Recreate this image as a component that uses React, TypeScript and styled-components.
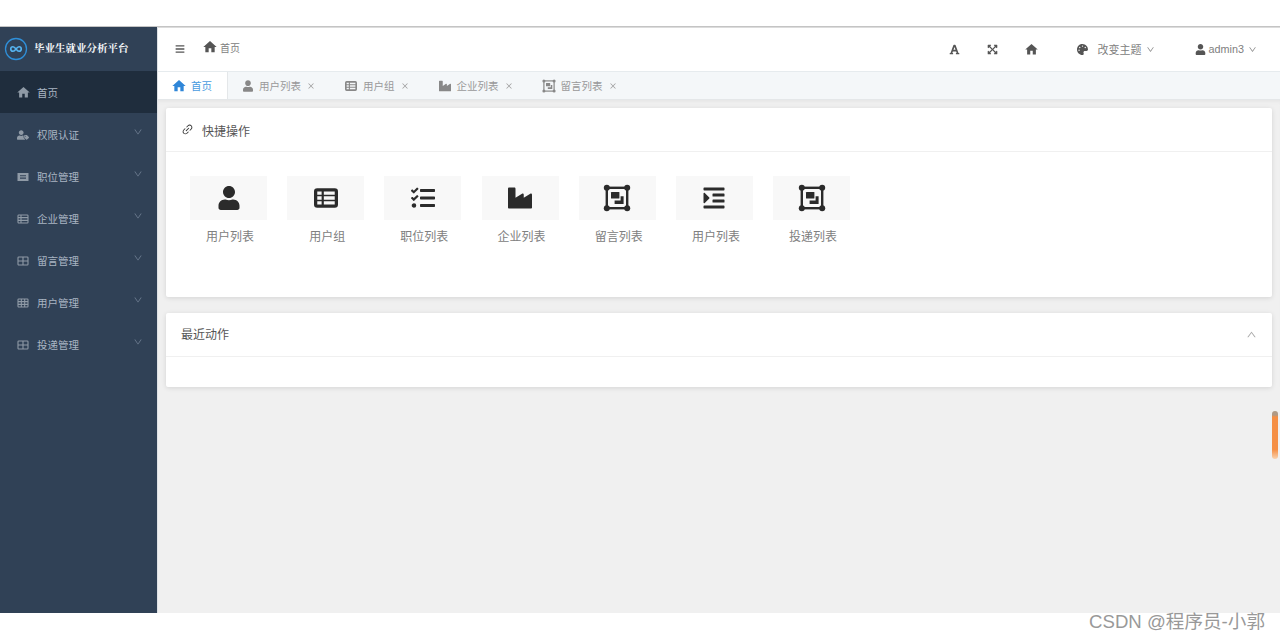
import React from "react";
import styled, { createGlobalStyle } from "styled-components";
import {
  FaBars,
  FaFont,
  FaExpandArrowsAlt,
  FaIndent,
  FaIndustry,
  FaPalette,
  FaTasks,
  FaUser,
  FaUserTag,
} from "react-icons/fa";
import { MdHome } from "react-icons/md";
import { AiOutlineClose, AiOutlineDown, AiOutlineLink, AiOutlineUp } from "react-icons/ai";

const GlobalStyle = createGlobalStyle`
  html, body {
    margin: 0;
    padding: 0;
    background: #fff;
  }
  body {
    font-family: "Noto Sans CJK SC", "Liberation Sans", sans-serif;
  }
`;

const Page = styled.div`
  position: relative;
  width: 1280px;
  height: 640px;
  overflow: hidden;
  padding-top: 26px;
  box-sizing: border-box;
`;

const Frame = styled.div`
  display: flex;
  height: 587px;
  box-sizing: border-box;
  border-top: 1px solid #c4c4c4;
`;

const Sidebar = styled.aside`
  width: 158px;
  flex-shrink: 0;
  background: #304156;
  border-right: 1px solid #dde1e5;
  box-sizing: border-box;
`;

const Logo = styled.div`
  display: flex;
  align-items: center;
  height: 44px;
  padding-left: 4px;
  gap: 6px;
  color: #f2f5f8;
  font-family: "Noto Serif CJK SC", "Noto Sans CJK SC", sans-serif;
  font-size: 10.5px;
  font-weight: 700;
`;

const LogoText = styled.span`
  margin-top: -3px;
`;

const MenuItem = styled.div<{ $active?: boolean }>`
  display: flex;
  align-items: center;
  height: 42px;
  padding: 1px 14px 0 17px;
  box-sizing: border-box;
  background: ${(p) => (p.$active ? "#1f2d3d" : "transparent")};
  color: #a9b5c3;
  font-size: 10.5px;

  svg.lead {
    width: 12px;
    height: 12px;
    margin-right: 8px;
    color: #8f9aa6;
  }
  svg.home {
    width: 15px;
    height: 15px;
    margin: 0 6px 0 -1px;
  }
`;

const MenuLabel = styled.span`
  flex: 1;
`;

const MenuArrow = styled(AiOutlineDown)`
  width: 10px;
  height: 10px;
  margin-top: -5px;
  color: #6f7f92;
`;

const Main = styled.main`
  flex: 1;
  display: flex;
  flex-direction: column;
  background: #f0f0f0;
  min-width: 0;
`;

const Header = styled.header`
  display: flex;
  align-items: center;
  height: 44px;
  background: #fff;
  box-shadow: inset 0 1px 0 #dcdcdc;
  color: #555;
  font-size: 11px;
  box-sizing: border-box;
`;

const Burger = styled(FaBars)`
  width: 10px;
  height: 10px;
  margin-left: 17px;
  margin-right: 17px;
  color: #555;
`;

const Crumb = styled.div`
  display: flex;
  align-items: center;
  gap: 2px;
  flex: 1;
  margin-top: -4px;
  font-size: 10px;
  color: #808080;

  svg {
    width: 16px;
    height: 16px;
    color: #555;
  }
`;

const ToolIcon = styled.span<{ $right: number; $size?: number }>`
  display: flex;
  margin-right: ${(p) => p.$right}px;
  color: #555;

  svg {
    width: ${(p) => p.$size ?? 11}px;
    height: ${(p) => p.$size ?? 11}px;
  }
`;

const HeadMenu = styled.div<{ $right: number }>`
  display: flex;
  align-items: center;
  margin-right: ${(p) => p.$right}px;
  color: #808080;
  font-size: 11px;
  line-height: 16px;

  svg.lead {
    width: 11px;
    height: 11px;
    color: #555;
  }
  svg.caret {
    width: 9px;
    height: 9px;
    color: #888;
    margin-left: 4px;
  }
`;

const ThemeLabel = styled.span`
  margin-left: 10px;
  margin-top: -1px;
`;

const UserLabel = styled.span`
  margin-left: 3px;
  font-family: "Liberation Sans", sans-serif;
  font-size: 10.8px;
`;

const TabBar = styled.nav`
  display: flex;
  height: 29px;
  background: #f4f7f9;
  border-top: 1px solid #e6ebee;
  border-bottom: 1px solid #e4e7e9;
  box-sizing: border-box;
`;

const Tab = styled.div<{ $active?: boolean }>`
  display: flex;
  align-items: center;
  padding: 0 15px;
  background: ${(p) => (p.$active ? "#fff" : "transparent")};
  border-right: ${(p) => (p.$active ? "1px solid #e4e7e9" : "none")};
  color: ${(p) => (p.$active ? "#4a9be0" : "#999")};
  font-size: 10.5px;

  svg.lead {
    width: 12px;
    height: 12px;
    margin-right: 6px;
    color: ${(p) => (p.$active ? "#2f86d8" : "#888")};
  }
  svg.narrow {
    width: 10px;
  }
  svg.home {
    width: 16px;
    height: 16px;
    margin: 0 4px 0 -2px;
  }
  svg.close {
    width: 8px;
    height: 8px;
    margin-left: 6px;
    color: #999;
  }
`;

const Content = styled.section`
  display: flex;
  flex-direction: column;
  gap: 16px;
  padding: 8px 8px 0 8px;
  box-shadow: inset 0 4px 4px -3px #e2e2e2;
`;

const Card = styled.div<{ $height: number }>`
  height: ${(p) => p.$height}px;
  background: #fff;
  border-radius: 2px;
  box-shadow: 0 1px 5px rgba(0, 0, 0, 0.12);
`;

const CardHead = styled.div`
  display: flex;
  align-items: center;
  height: 44px;
  padding: 0 15px;
  gap: 8px;
  border-bottom: 1px solid #f0f0f0;
  color: #555;
  font-size: 12px;
  box-sizing: border-box;

  svg.lead {
    width: 13px;
    height: 13px;
    color: #333;
  }
`;

const HeadTitle = styled.span<{ $dy: number }>`
  flex: 1;
  margin-top: ${(p) => p.$dy}px;
`;

const CollapseArrow = styled(AiOutlineUp)`
  width: 11px;
  height: 11px;
  color: #aaa;
`;

const Shortcuts = styled.div`
  display: flex;
  gap: 20.2px;
  padding: 24px 0 0 24px;
`;

const Shortcut = styled.div`
  width: 77px;
  display: flex;
  flex-direction: column;
  align-items: center;
  gap: 7px;
  color: #808080;
  font-size: 12px;
  line-height: 18px;
`;

const ShortcutLabel = styled.span`
  margin-left: 3px;
`;

const Tile = styled.div`
  width: 100%;
  height: 44px;
  display: flex;
  align-items: center;
  justify-content: center;
  background: #f8f8f8;
  color: #2b2b2b;

  svg {
    width: 24px;
    height: 24px;
  }
`;

const ScrollThumb = styled.div`
  position: absolute;
  left: 1272px;
  top: 411px;
  width: 6px;
  height: 48px;
  border-radius: 3px;
  background: linear-gradient(#b09a85 0 4px, #f58f45 6px 80%, #f9d3b0);
`;

const Watermark = styled.div`
  position: absolute;
  right: 15px;
  top: 610px;
  font-family: "Liberation Sans", "Noto Sans CJK SC", sans-serif;
  font-size: 18.6px;
  line-height: 24px;
  color: #999;
`;

type IconProps = { className?: string };

const LogoMark = () => (
  <svg width="24" height="24" viewBox="0 0 24 24" fill="none">
    <circle cx="12" cy="12" r="10.500" stroke="#2f8fd8" strokeWidth="1.3" />
    <path
      transform="translate(3 3) scale(0.75)"
      d="M12 12c-1.500-2-2.500-3-4-3a3 3 0 0 0 0 6c1.500 0 2.500-1 4-3s2.500-3 4-3a3 3 0 0 1 0 6c-1.500 0-2.500-1-4-3z"
      stroke="#56b4f0"
      strokeWidth="2.200"
    />
  </svg>
);

const TableIcon = ({ className }: IconProps) => (
  <svg className={className} viewBox="1 1 22 22" fill="currentColor">
    <path
      fillRule="evenodd"
      d="M4 3h16a3 3 0 0 1 3 3v12a3 3 0 0 1-3 3H4a3 3 0 0 1-3-3V6a3 3 0 0 1 3-3zM4 6v3h4V6zm6 0v3h10V6zM4 10.500v3h4v-3zm6 0v3h10v-3zM4 15v3h4v-3zm6 0v3h10v-3z"
    />
  </svg>
);

const ObjectIcon = ({ className }: IconProps) => (
  <svg className={className} viewBox="2 2 20 20" fill="currentColor" overflow="visible">
    <rect x="3.500" y="3.500" width="17" height="17" fill="none" stroke="currentColor" strokeWidth="2" />
    <circle cx="3.500" cy="3.500" r="2.500" />
    <circle cx="20.500" cy="3.500" r="2.500" />
    <circle cx="3.500" cy="20.500" r="2.500" />
    <circle cx="20.500" cy="20.500" r="2.500" />
    <rect x="7" y="7" width="7" height="5.500" rx="0.500" />
    <path d="M15 10.500h2.500V17H10v-3h5z" />
  </svg>
);

const IdCardIcon = ({ className }: IconProps) => (
  <svg className={className} viewBox="0 0 24 24" fill="currentColor">
    <path
      fillRule="evenodd"
      d="M1 4h22v16H1zM6 8v1.500h12V8zm0 3.300v1.500h12v-1.500zm0 3.200V16h12v-1.500z"
    />
  </svg>
);

// rows and columns drawn as a ruled box, as the sidebar's table glyphs are
const GridIcon = ({ className, rows, cols, side }: IconProps & { rows: number; cols: number; side?: boolean }) => {
  const lines: string[] = [];
  for (let r = 1; r < rows; r++) {
    const y = 4 + (16 * r) / rows;
    lines.push(`M2 ${y}H22`);
  }
  if (side) {
    lines.push("M8 4V20");
  } else {
    for (let c = 1; c < cols; c++) {
      const x = 2 + (20 * c) / cols;
      lines.push(`M${x} 4V20`);
    }
  }
  return (
    <svg className={className} viewBox="0 0 24 24" fill="none" stroke="currentColor" strokeWidth="2.200">
      <rect x="2" y="4" width="20" height="16" rx="1.500" />
      <path d={lines.join("")} />
    </svg>
  );
};

const menus = [
  { label: "权限认证", icon: <FaUserTag className="lead" /> },
  { label: "职位管理", icon: <IdCardIcon className="lead" /> },
  { label: "企业管理", icon: <GridIcon className="lead" rows={3} cols={2} side /> },
  { label: "留言管理", icon: <GridIcon className="lead" rows={2} cols={2} /> },
  { label: "用户管理", icon: <GridIcon className="lead" rows={3} cols={3} /> },
  { label: "投递管理", icon: <GridIcon className="lead" rows={2} cols={2} /> },
];

const tabs = [
  { label: "用户列表", icon: FaUser, iconClass: "lead narrow" },
  { label: "用户组", icon: TableIcon, iconClass: "lead" },
  { label: "企业列表", icon: FaIndustry, iconClass: "lead" },
  { label: "留言列表", icon: ObjectIcon, iconClass: "lead" },
];

const shortcuts = [
  { label: "用户列表", icon: FaUser },
  { label: "用户组", icon: TableIcon },
  { label: "职位列表", icon: FaTasks },
  { label: "企业列表", icon: FaIndustry },
  { label: "留言列表", icon: ObjectIcon },
  { label: "用户列表", icon: FaIndent },
  { label: "投递列表", icon: ObjectIcon },
];

export default function App() {
  return (
    <Page>
      <GlobalStyle />
      <Frame>
        <Sidebar>
          <Logo>
            <LogoMark />
            <LogoText>毕业生就业分析平台</LogoText>
          </Logo>
          <MenuItem $active>
            <MdHome className="lead home" />
            <MenuLabel>首页</MenuLabel>
          </MenuItem>
          {menus.map((m) => (
            <MenuItem key={m.label}>
              {m.icon}
              <MenuLabel>{m.label}</MenuLabel>
              <MenuArrow />
            </MenuItem>
          ))}
        </Sidebar>
        <Main>
          <Header>
            <Burger />
            <Crumb>
              <MdHome />
              首页
            </Crumb>
            <ToolIcon $right={27}>
              <FaFont />
            </ToolIcon>
            <ToolIcon $right={26}>
              <FaExpandArrowsAlt />
            </ToolIcon>
            <ToolIcon $right={38} $size={15}>
              <MdHome />
            </ToolIcon>
            <HeadMenu $right={40}>
              <FaPalette className="lead" />
              <ThemeLabel>改变主题</ThemeLabel>
              <AiOutlineDown className="caret" />
            </HeadMenu>
            <HeadMenu $right={23}>
              <FaUser className="lead" />
              <UserLabel>admin3</UserLabel>
              <AiOutlineDown className="caret" />
            </HeadMenu>
          </Header>
          <TabBar>
            <Tab $active>
              <MdHome className="lead home" />
              首页
            </Tab>
            {tabs.map((t) => (
              <Tab key={t.label}>
                <t.icon className={t.iconClass} />
                {t.label}
                <AiOutlineClose className="close" />
              </Tab>
            ))}
          </TabBar>
          <Content>
            <Card $height={189}>
              <CardHead>
                <AiOutlineLink className="lead" />
                <HeadTitle $dy={1}>快捷操作</HeadTitle>
              </CardHead>
              <Shortcuts>
                {shortcuts.map((s, i) => (
                  <Shortcut key={i}>
                    <Tile>
                      <s.icon />
                    </Tile>
                    <ShortcutLabel>{s.label}</ShortcutLabel>
                  </Shortcut>
                ))}
              </Shortcuts>
            </Card>
            <Card $height={74}>
              <CardHead>
                <HeadTitle $dy={-2}>最近动作</HeadTitle>
                <CollapseArrow />
              </CardHead>
            </Card>
          </Content>
        </Main>
      </Frame>
      <ScrollThumb />
      <Watermark>CSDN @程序员-小郭</Watermark>
    </Page>
  );
}
